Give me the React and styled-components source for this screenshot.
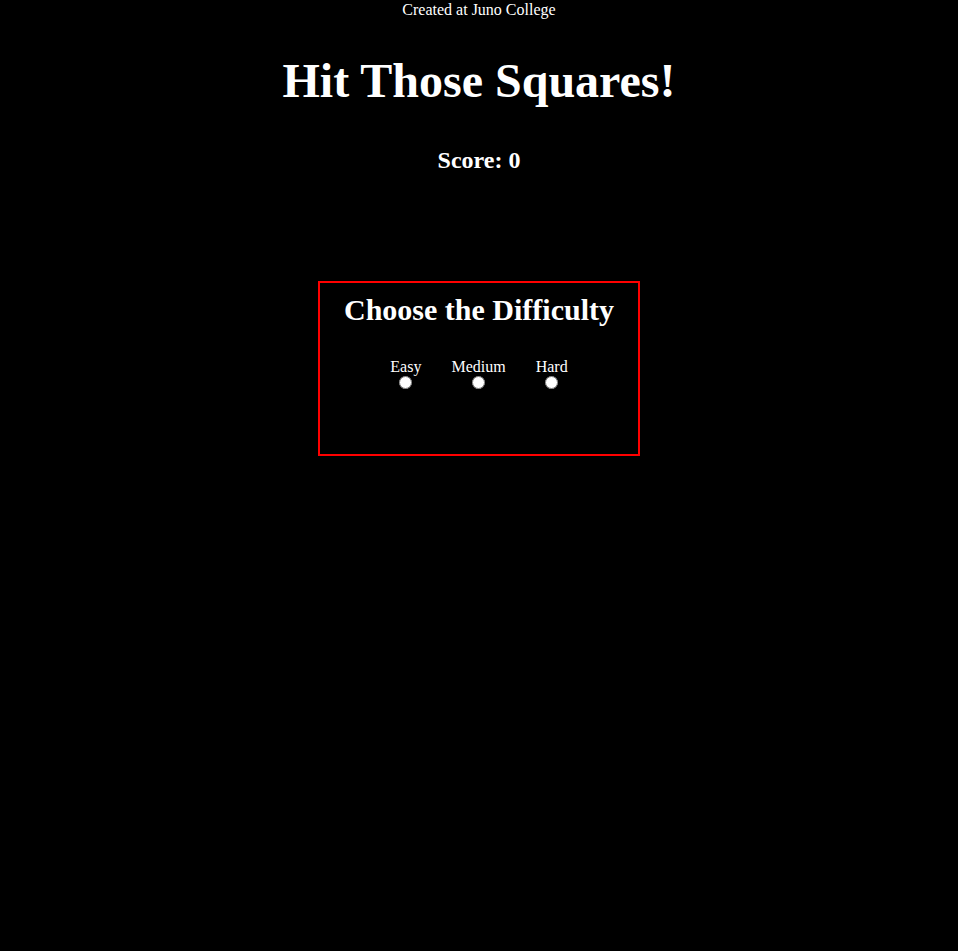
import React from 'react';
import styled, { createGlobalStyle } from 'styled-components';

const GlobalStyle = createGlobalStyle`
	html, body {
		margin: 0;
		padding: 0;
		background-color: #000;
		min-height: 100%;
	}
	body {
		font-family: 'Liberation Serif', 'Times New Roman', serif;
		color: #fff;
	}
`;

const levels = ['Easy', 'Medium', 'Hard'];

function App() {
	return (
		<>
			<GlobalStyle />
			<Wrapper>
				<p className='credit'>Created at Juno College</p>
				<h1 className='title'>Hit Those Squares!</h1>
				<h2 className='score'>Score: 0</h2>
				<DifficultyBox>
					<h2 className='box-title'>Choose the Difficulty</h2>
					<Options>
						{levels.map((level) => (
							<Option key={level}>
								<span>{level}</span>
								<input type='radio' name='difficulty' value={level} />
							</Option>
						))}
					</Options>
				</DifficultyBox>
			</Wrapper>
		</>
	);
}

const Wrapper = styled.div`
	min-height: 951px;
	display: flex;
	flex-direction: column;
	align-items: center;
	text-align: center;
	background-color: #000;

	.credit {
		margin: 1px 0 0;
		font-size: 16px;
	}

	.title {
		margin: 34px 0 0;
		font-size: 48px;
		font-weight: bold;
	}

	.score {
		margin: 39px 0 0;
		font-size: 24px;
		font-weight: bold;
	}
`;

const DifficultyBox = styled.section`
	box-sizing: border-box;
	width: 322px;
	height: 175px;
	margin-top: 107px;
	padding-top: 10px;
	border: 2px solid #ff0000;
	display: flex;
	flex-direction: column;
	align-items: center;

	.box-title {
		margin: 0;
		font-size: 30px;
		font-weight: bold;
	}
`;

const Options = styled.div`
	display: flex;
	gap: 30px;
	margin-top: 31px;
`;

const Option = styled.label`
	display: flex;
	flex-direction: column;
	align-items: center;
	font-size: 16px;

	input {
		margin: 0;
		width: 13px;
		height: 13px;
	}
`;

export default App;
